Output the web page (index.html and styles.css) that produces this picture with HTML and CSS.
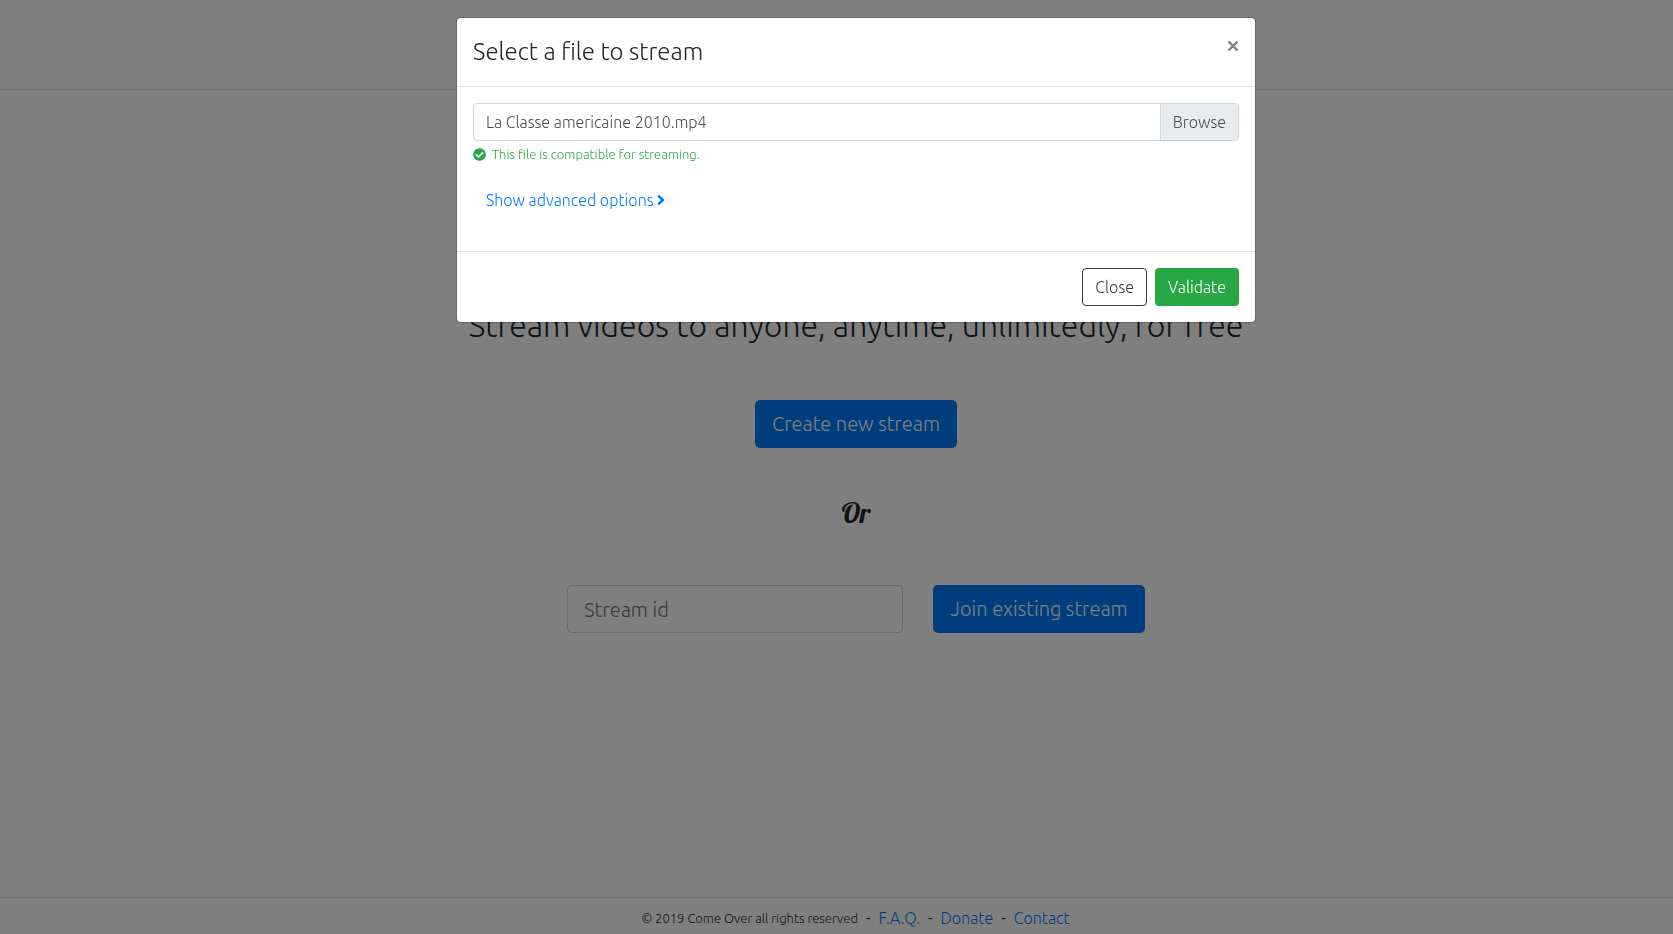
FILE: index.html
```html
<!DOCTYPE html>
<html lang="en">
<head>
<meta charset="utf-8">
<title>Come Over</title>
<link rel="stylesheet" href="styles.css">
</head>
<body>
<div class="page">
  <header class="site-header"></header>
  <main class="home">
    <h1 class="tagline">Stream videos to anyone, anytime, unlimitedly, for free</h1>
    <button class="btn btn-primary btn-lg" type="button">Create new stream</button>
    <p class="or">Or</p>
    <form class="join">
      <input class="stream-id" type="text" placeholder="Stream id" aria-label="Stream id">
      <button class="btn btn-primary btn-lg" type="button">Join existing stream</button>
    </form>
  </main>
  <footer class="site-footer">
    <small>© 2019 Come Over all rights reserved</small>
    <span>-</span>
    <a href="#faq">F.A.Q.</a>
    <span>-</span>
    <a href="#donate">Donate</a>
    <span>-</span>
    <a href="#contact">Contact</a>
  </footer>
</div>
<div class="backdrop">
  <section class="modal" role="dialog" aria-modal="true" aria-labelledby="modal-title">
    <div class="modal-header">
      <h2 id="modal-title">Select a file to stream</h2>
      <button class="dismiss" type="button" aria-label="Dismiss">
        <svg viewBox="0 0 12 12" width="12" height="12"><path d="M1.500 1.500 10.500 10.500M10.500 1.500 1.500 10.500" fill="none" stroke="currentColor" stroke-width="2.400"/></svg>
      </button>
    </div>
    <div class="modal-body">
      <div class="file-field">
        <input class="file-input" type="file" id="file">
        <label class="file-label" for="file"><span class="file-name">La Classe americaine 2010.mp4</span><span class="file-browse">Browse</span></label>
      </div>
      <p class="hint">
        <svg viewBox="0 0 512 512" width="13" height="13" aria-hidden="true"><path fill="currentColor" d="M504 256c0 136.967-111.033 248-248 248S8 392.967 8 256 119.033 8 256 8s248 111.033 248 248zM227.314 387.314l184-184c6.248-6.248 6.248-16.379 0-22.627l-22.627-22.627c-6.248-6.249-16.379-6.249-22.628 0L216 308.118l-70.059-70.059c-6.248-6.248-16.379-6.248-22.628 0l-22.627 22.627c-6.248 6.248-6.248 16.379 0 22.627l104 104c6.249 6.249 16.379 6.249 22.628.001z"/></svg>
        <span>This file is compatible for streaming.</span>
      </p>
      <button class="btn btn-link" type="button">Show advanced options
        <svg viewBox="0 0 8 12" width="8" height="12" aria-hidden="true"><path fill="none" stroke="currentColor" stroke-width="2.500" d="M1.200 1.600 5.800 6 1.200 10.400"/></svg>
      </button>
    </div>
    <div class="modal-footer">
      <button class="btn btn-outline" type="button">Close</button>
      <button class="btn btn-success" type="button">Validate</button>
    </div>
  </section>
</div>
</body>
</html>
```
FILE: styles.css
```css
* { box-sizing: border-box; }

body {
  margin: 0;
  background: #fff;
  color: #212529;
  font-family: Ubuntu, "Noto Sans", sans-serif;
  font-weight: 300;
  font-size: 16px;
  line-height: 24px;
}

h1, h2, p { margin: 0; font-weight: 300; }
button, input { font: inherit; }
a { color: #007bff; text-decoration: none; }

.page {
  display: flex;
  flex-direction: column;
  min-height: 100vh;
}

.site-header {
  height: 90px;
  border-bottom: 1px solid #dee2e6;
}

.home {
  flex: 1;
  display: flex;
  flex-direction: column;
  align-items: center;
  padding: 216px 0 0 39px;
}

.tagline {
  margin-bottom: 56px;
  font-size: 32px;
  line-height: 38px;
  font-kerning: none;
}

.or {
  margin: 44px 0 52px;
  font-family: Lobster, "Liberation Serif", serif;
  font-size: 28px;
  font-weight: 400;
  line-height: 41px;
}

.join { display: flex; gap: 30px; }

.stream-id {
  width: 336px;
  height: 48px;
  padding: 8px 16px;
  border: 1px solid #ced4da;
  border-radius: 5px;
  font-size: 20px;
  line-height: 30px;
}
.stream-id::placeholder { color: #6c757d; opacity: 1; }

.site-footer {
  display: flex;
  justify-content: center;
  align-items: center;
  gap: 8px;
  height: 37px;
  padding: 4px 0 0 38px;
  border-top: 1px solid #dee2e6;
}
.site-footer small { font-size: 13px; }

.btn {
  padding: 6px 12px;
  border: 1px solid transparent;
  border-radius: 4px;
  background: transparent;
  cursor: pointer;
}
.btn-lg {
  padding: 8px 16px;
  border-radius: 5px;
  font-size: 20px;
  line-height: 30px;
}
.btn-primary { background: #007bff; color: #fff; }
.btn-success { background: #28a745; color: #fff; }
.btn-outline { border-color: #343a40; color: #343a40; }
.btn-link { color: #007bff; }

.backdrop {
  position: fixed;
  inset: 0;
  padding: 17px 0 0 39px;
  background: rgba(0, 0, 0, .5);
}

.modal {
  max-width: 800px;
  margin: 0 auto;
  border: 1px solid rgba(0, 0, 0, .2);
  border-radius: 5px;
  background: #fff;
  background-clip: padding-box;
}

.modal-header {
  display: flex;
  justify-content: space-between;
  align-items: flex-start;
  padding: 16px;
  border-bottom: 1px solid #dee2e6;
}
.modal-header h2 { font-size: 24px; line-height: 36px; }

.dismiss {
  display: flex;
  padding: 6px 0;
  border: 0;
  background: none;
  color: #7f7f7f;
  cursor: pointer;
}

.modal-body { padding: 16px 16px 32px; }

.file-field { position: relative; }
.file-input {
  position: absolute;
  inset: 0;
  width: 100%;
  opacity: 0;
}
.file-label {
  display: flex;
  overflow: hidden;
  border: 1px solid #ced4da;
  border-radius: 4px;
  color: #495057;
}
.file-name { flex: 1; padding: 6px 12px; }
.file-browse {
  padding: 6px 12px;
  border-left: 1px solid #ced4da;
  background: #e9ecef;
}

.hint {
  display: flex;
  align-items: center;
  gap: 6px;
  margin: 4px 0 18px;
  color: #28a745;
  font-size: 13px;
  line-height: 18px;
}

.modal-footer {
  display: flex;
  justify-content: flex-end;
  gap: 8px;
  padding: 16px;
  border-top: 1px solid #dee2e6;
}
```
